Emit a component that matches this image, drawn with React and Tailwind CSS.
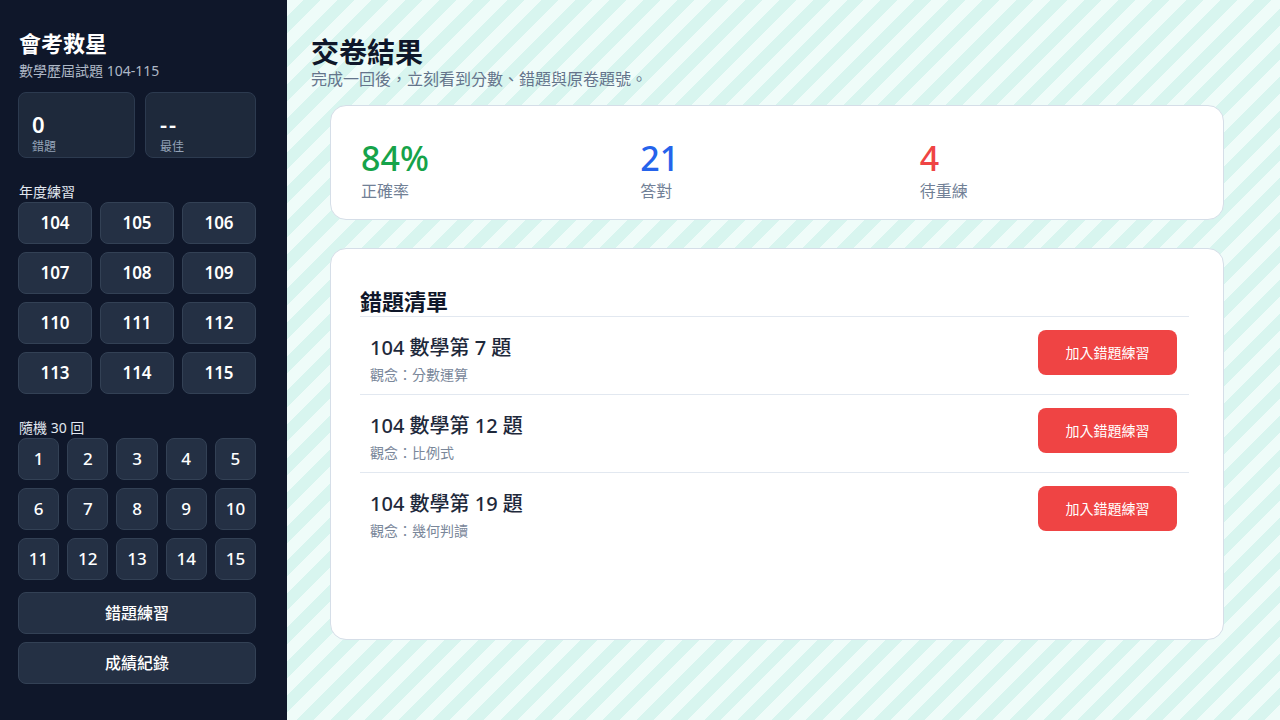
const years = [104, 105, 106, 107, 108, 109, 110, 111, 112, 113, 114, 115];
const rounds = Array.from({ length: 15 }, (_, i) => i + 1);

const mistakes = [
    { title: '104 數學第 7 題', concept: '觀念：分數運算' },
    { title: '104 數學第 12 題', concept: '觀念：比例式' },
    { title: '104 數學第 19 題', concept: '觀念：幾何判讀' },
];

const stats = [
    { value: '84%', label: '正確率', color: 'text-[#16a34a]' },
    { value: '21', label: '答對', color: 'text-[#2563eb]' },
    { value: '4', label: '待重練', color: 'text-[#ef4444]' },
];

function Sidebar() {
    return (
        <aside className="w-[287px] shrink-0 bg-[#0f172a] pl-[18px] pr-[31px] pt-[28px] text-white">
            <h1 className="text-[22px] leading-[30px] font-semibold pl-px">會考救星</h1>
            <p className="mt-[3px] text-[14px] leading-[20px] text-[#aeb8c6] pl-px">數學歷屆試題 104-115</p>

            <div className="mt-[11px] grid grid-cols-[117px_111px] gap-[10px]">
                <div className="h-[66px] rounded-lg border border-[#2c3a4f] bg-[#1e293b] pl-[13px] pt-[19px]">
                    <div className="text-[22px] leading-[24px] font-semibold">0</div>
                    <div className="mt-[2px] text-[12px] leading-[18px] text-[#94a3b8]">錯題</div>
                </div>
                <div className="h-[66px] rounded-lg border border-[#2c3a4f] bg-[#1e293b] pl-[14px] pt-[19px]">
                    <div className="text-[22px] leading-[24px] font-semibold tracking-[2px]">--</div>
                    <div className="mt-[2px] text-[12px] leading-[18px] text-[#94a3b8]">最佳</div>
                </div>
            </div>

            <div className="mt-[24px] text-[14px] leading-[20px] text-[#e2e8f0] pl-px">年度練習</div>
            <div className="grid grid-cols-3 gap-2">
                {years.map((y) => (
                    <button
                        key={y}
                        className="h-[42px] rounded-lg border border-[#334155] bg-[#243044] text-[17px] font-semibold text-white"
                    >
                        {y}
                    </button>
                ))}
            </div>

            <div className="mt-[24px] text-[14px] leading-[20px] text-[#e2e8f0] pl-px">隨機 30 回</div>
            <div className="grid grid-cols-5 gap-2">
                {rounds.map((n) => (
                    <button
                        key={n}
                        className="h-[42px] rounded-lg border border-[#334155] bg-[#243044] text-[17px] font-medium text-white"
                    >
                        {n}
                    </button>
                ))}
            </div>

            <button className="mt-3 h-[42px] w-full rounded-lg border border-[#334155] bg-[#243044] text-[16px] font-medium">
                錯題練習
            </button>
            <button className="mt-2 h-[42px] w-full rounded-lg border border-[#334155] bg-[#243044] text-[16px] font-medium">
                成績紀錄
            </button>
        </aside>
    );
}

function MistakeRow({ item }) {
    return (
        <div className="flex h-[78px] items-start justify-between border-t border-[#e2e8f0] pl-[10px] pr-[12px] pt-[13px]">
            <div className="pt-[4px]">
                <div className="text-[20px] leading-[28px] font-medium text-[#1e293b]">{item.title}</div>
                <div className="mt-[3px] text-[14px] leading-[20px] text-[#7a879a]">{item.concept}</div>
            </div>
            <button className="h-[45px] w-[139px] rounded-lg bg-[#ef4444] text-[14px] font-normal text-white">
                加入錯題練習
            </button>
        </div>
    );
}

export default function App() {
    return (
        <div className="flex min-h-screen font-['Noto_Sans','Noto_Sans_CJK_TC',sans-serif]">
            <Sidebar />
            <main className="flex-1 bg-[repeating-linear-gradient(135deg,#effcf9_0_12px,#d8f5ef_12px_24px)] pl-[24px] pt-[36px]">
                <h2 className="text-[28px] leading-[32px] font-semibold text-[#0f172a]">交卷結果</h2>
                <p className="text-[16px] leading-[22px] text-[#64748b]">完成一回後，立刻看到分數、錯題與原卷題號。</p>

                <section className="ml-[19px] mt-[15px] w-[894px] rounded-2xl border border-[#d5dee8] bg-white pl-[30px] pr-[24px] pt-[30px] pb-[17px]">
                    <div className="grid grid-cols-3">
                        {stats.map((s) => (
                            <div key={s.label}>
                                <div className={`text-[34px] leading-[44px] font-medium ${s.color}`}>{s.value}</div>
                                <div className="text-[16px] leading-[22px] text-[#718096]">{s.label}</div>
                            </div>
                        ))}
                    </div>
                </section>

                <section className="ml-[19px] mt-[28px] h-[392px] w-[894px] rounded-2xl border border-[#d5dee8] bg-white pl-[29px] pr-[34px] pt-[38px]">
                    <h3 className="text-[22px] leading-[29px] font-semibold text-[#0f172a]">錯題清單</h3>
                    {mistakes.map((m) => (
                        <MistakeRow key={m.title} item={m} />
                    ))}
                </section>
            </main>
        </div>
    );
}
